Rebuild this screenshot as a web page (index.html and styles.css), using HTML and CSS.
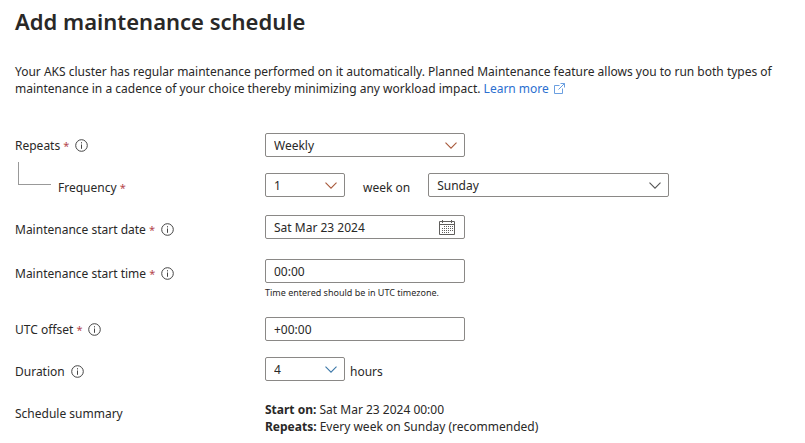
FILE: index.html
```html
<!DOCTYPE html>
<html lang="en">
<head>
<meta charset="utf-8">
<title>Add maintenance schedule</title>
<link rel="stylesheet" href="styles.css">
</head>
<body>
<svg class="sprite" aria-hidden="true">
  <symbol id="info" viewBox="0 0 13 13"><circle cx="6.5" cy="6.5" r="5.8" fill="none" stroke="currentColor"/><path d="M6.5 5.5v4.3M6.5 3.2v1.2" stroke="currentColor"/></symbol>
  <symbol id="chevron" viewBox="0 0 12 7"><path d="M.5 .7 6 6.2 11.500 .7" fill="none" stroke="currentColor" stroke-width="1.100"/></symbol>
</svg>
<main class="page">
  <h1>Add maintenance schedule</h1>
  <p class="intro">Your AKS cluster has regular maintenance performed on it automatically. Planned Maintenance feature allows you to run both types of maintenance in a cadence of your choice thereby minimizing any workload impact. <a href="#learn">Learn more<svg class="external" viewBox="0 0 11 11" aria-hidden="true"><path d="M5.500 2.500h-5v8h8v-5M6.500.5h4v4M10.500.5 4.500 6.500" fill="none" stroke="currentColor"/></svg></a></p>
  <form>
    <div class="row">
      <div class="label"><label for="repeats">Repeats <span class="req">*</span></label><svg class="info"><use href="#info"/></svg></div>
      <div class="field"><span class="select medium"><select id="repeats"><option>Weekly</option></select><svg class="chevron warm"><use href="#chevron"/></svg></span></div>
    </div>
    <div class="row">
      <div class="label low"><span class="branch"></span><label for="frequency">Frequency <span class="req">*</span></label></div>
      <div class="field"><span class="select small"><select id="frequency"><option>1</option></select><svg class="chevron warm"><use href="#chevron"/></svg></span><label class="between" for="day">week on</label><span class="select large"><select id="day"><option>Sunday</option></select><svg class="chevron"><use href="#chevron"/></svg></span></div>
    </div>
    <div class="row spaced">
      <div class="label low"><label for="date">Maintenance start date <span class="req">*</span></label><svg class="info"><use href="#info"/></svg></div>
      <div class="field"><span class="select medium"><input id="date" type="text" value="Sat Mar 23 2024"><svg class="calendar" viewBox="0 0 16 15" aria-hidden="true"><path d="M.5 1.500h15v13H.5zM.5 4.500h15M3.500 0v3M12.500 0v3" fill="none" stroke="currentColor"/><path d="M5 6.500h9M3 8.500h11M3 10.500h11M3 12.500h7" fill="none" stroke="currentColor" stroke-dasharray="1 1"/></svg></span></div>
    </div>
    <div class="row loose">
      <div class="label low"><label for="time">Maintenance start time <span class="req">*</span></label><svg class="info"><use href="#info"/></svg></div>
      <div class="field stack"><input class="medium" id="time" type="text" value="00:00"><small>Time entered should be in UTC timezone.</small></div>
    </div>
    <div class="row">
      <div class="label"><label for="offset">UTC offset <span class="req">*</span></label><svg class="info"><use href="#info"/></svg></div>
      <div class="field"><input class="medium" id="offset" type="text" value="+00:00"></div>
    </div>
    <div class="row">
      <div class="label low"><label for="duration">Duration</label><svg class="info"><use href="#info"/></svg></div>
      <div class="field"><span class="select small"><select id="duration"><option>4</option></select><svg class="chevron cool"><use href="#chevron"/></svg></span><span class="unit">hours</span></div>
    </div>
    <div class="row loose">
      <div class="label">Schedule summary</div>
      <div class="summary"><div><b>Start on:</b> Sat Mar 23 2024 00:00</div><div><b>Repeats:</b> Every week on Sunday (recommended)</div></div>
    </div>
  </form>
</main>
</body>
</html>
```
FILE: styles.css
```css
* { box-sizing: border-box; }
body { margin: 0; background: #fff; color: #292827; font: 12px/17px "Noto Sans", sans-serif; }
.sprite { display: none; }
.page { padding: 6px 15px 0; }
h1 { margin: 0; font-size: 22px; line-height: 30px; font-weight: 600; }
.intro { margin: 27px 0 36px; }
a { color: #2b6fd0; text-decoration: none; }
.external { width: 11px; height: 11px; margin-left: 5px; color: #6a9fe0; vertical-align: -1px; }
form { display: flex; flex-direction: column; gap: 16px; }
.row { display: grid; grid-template-columns: 250px 1fr; }
.spaced { margin-top: 2px; }
.loose { margin-top: 4px; }
.label { display: flex; align-items: center; gap: 6px; height: 24px; }
.low { padding-top: 4px; }
.req { color: #b4464c; font-size: 11px; }
.info { width: 13px; height: 13px; margin-top: 1px; color: #444; }
.branch { width: 33px; height: 23px; margin: -28px 1px 0 3px; border: solid #999; border-width: 0 0 1px 1px; }
.field { display: flex; align-items: flex-start; }
.stack { flex-direction: column; }
.select { display: grid; align-items: center; }
.select > * { grid-area: 1 / 1; }
.small { width: 80px; }
.medium { width: 200px; }
.large { width: 241px; }
select, input { width: 100%; height: 24px; margin: 0; padding: 0 8px; border: 1px solid #8a8886; border-radius: 2px; background: #fff; color: inherit; font: inherit; appearance: none; }
input.medium { width: 200px; }
.chevron { width: 12px; height: 7px; margin-right: 8px; justify-self: end; color: #555; pointer-events: none; }
.warm { color: #a85a3c; }
.cool { color: #3c78a8; }
.calendar { width: 16px; height: 15px; margin-right: 10px; justify-self: end; color: #605e5c; pointer-events: none; }
.between { margin: 6px 18px 0; }
.unit { margin: 6px 0 0 5px; }
small { font-size: 9px; line-height: 20px; margin-bottom: -2px; }
```
